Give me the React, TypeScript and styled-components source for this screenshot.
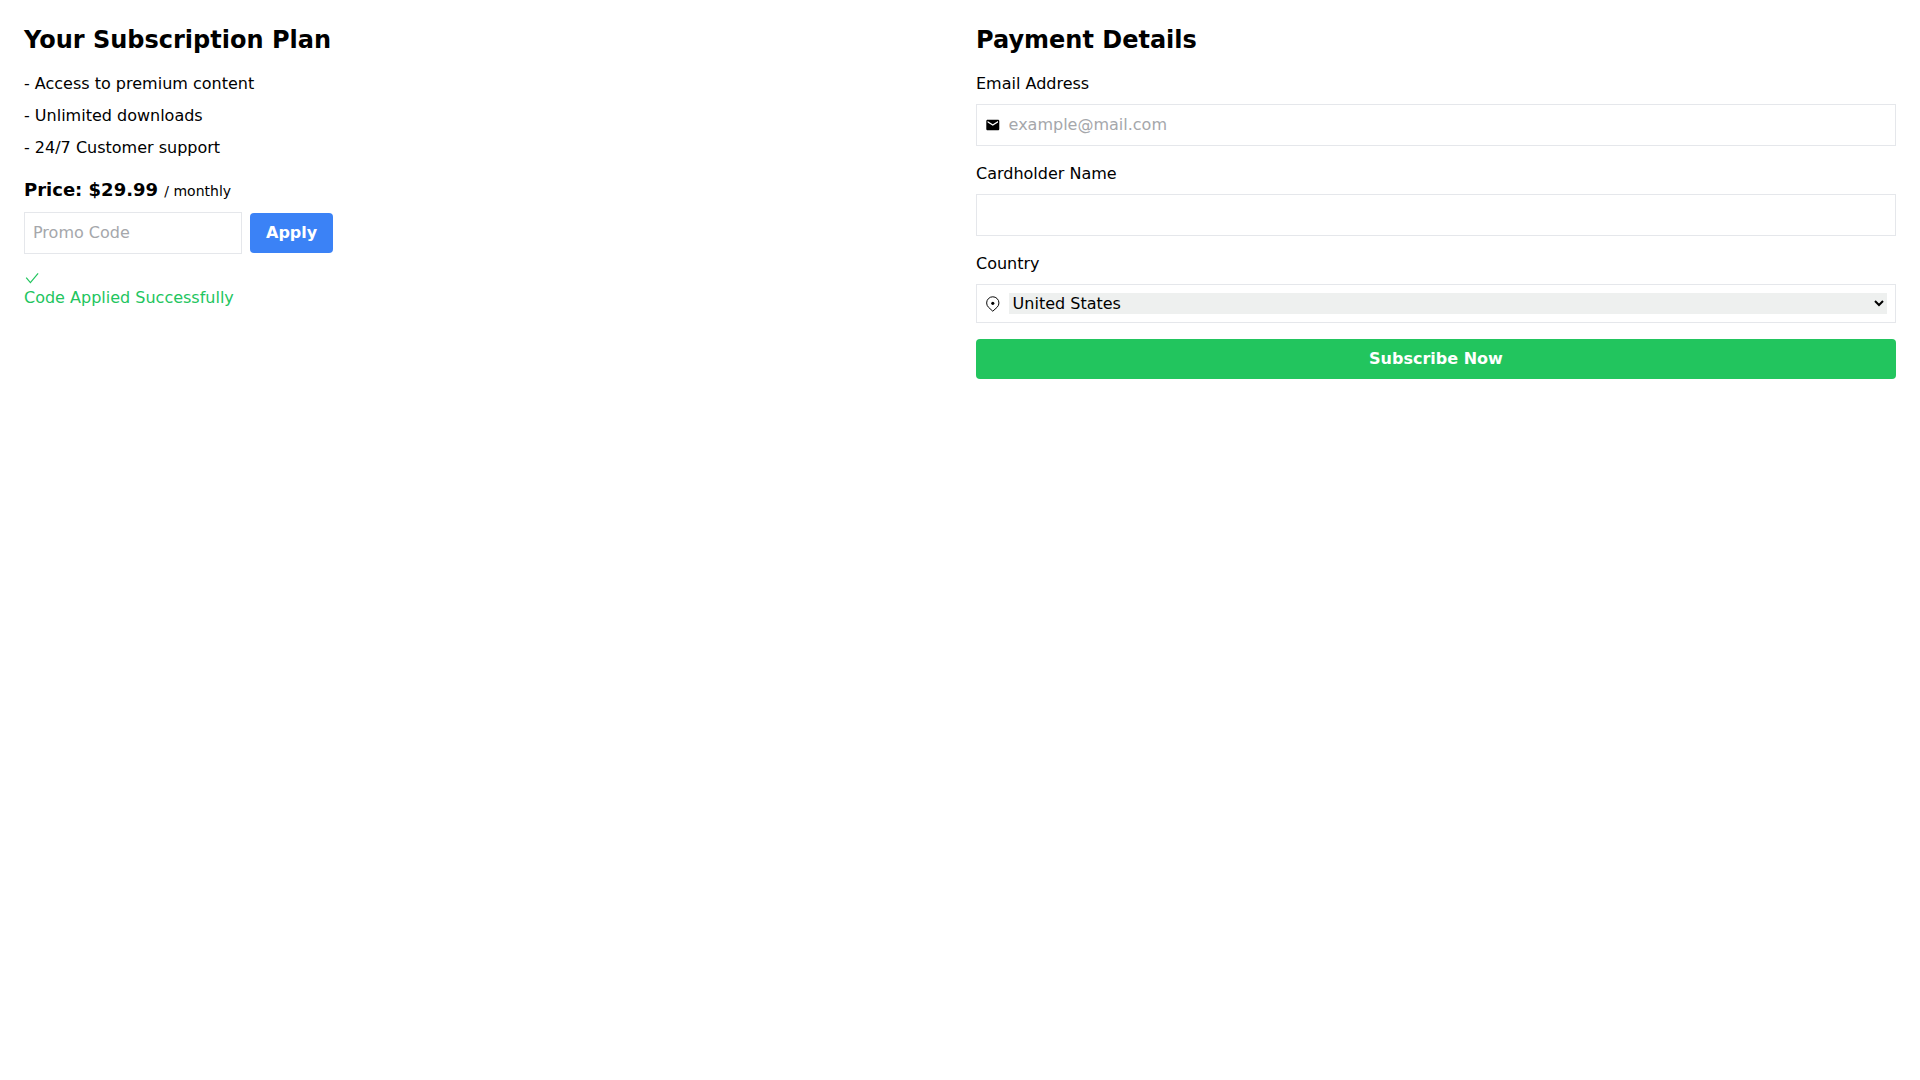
import React, { useState } from 'react';
import styled, { createGlobalStyle } from 'styled-components'
import { MdEmail } from 'react-icons/md'

const GlobalStyle = createGlobalStyle`
*, *::before, *::after {
box-sizing: border-box;
}

body {
margin: 0;
background-color: white;
color: black;
font-family: "DejaVu Sans", sans-serif;
font-size: 16px;
line-height: 24px;
}
`

const PageContainer = styled.div`
display: grid;
grid-template-columns: 1fr 1fr;
gap: 32px;
padding: 24px;
`

const Column = styled.section`
display: flex;
flex-direction: column;
`

const Title = styled.h2`
margin: 0 0 16px;
font-size: 24px;
line-height: 32px;
font-weight: 700;
`

const FeatureList = styled.ul`
display: flex;
flex-direction: column;
gap: 8px;
margin: 0 0 16px;
padding: 0;
list-style: none;
`

const Price = styled.div`
margin-bottom: 8px;
font-size: 18px;
line-height: 28px;
font-weight: 700;
`

const Period = styled.span`
font-size: 14px;
line-height: 20px;
font-weight: 400;
`

const PromoRow = styled.div`
display: flex;
align-items: center;
gap: 8px;
margin-bottom: 16px;
`

const TextInput = styled.input`
width: 100%;
padding: 0;
border: none;
outline: none;
background: transparent;
color: inherit;
font: inherit;

&::placeholder {
  color: #a5a7ab;
  opacity: 1;
}
`

const PromoInput = styled(TextInput)`
width: auto;
padding: 8px;
border: 1px solid #e5e7eb;
`

const Button = styled.button<{ $color: string }>`
padding: 8px 16px;
border: none;
border-radius: 4px;
background-color: ${({ $color }) => $color};
color: white;
font: inherit;
font-weight: 700;
cursor: pointer;
`

const Icon = styled.svg`
width: 16px;
height: 16px;
fill: none;
stroke: currentColor;
`

const SuccessMessage = styled.div`
color: #22c55e;

svg {
  display: block;
}
`

const Label = styled.label`
margin-bottom: 8px;
`

const Field = styled.div`
display: flex;
align-items: center;
gap: 8px;
margin-bottom: 16px;
padding: 8px;
border: 1px solid #e5e7eb;
`

const CountrySelect = styled.select`
width: 100%;
padding: 0;
border: none;
border-radius: 0;
outline: none;
background-color: #eef0ef;
color: black;
font: inherit;
`

const features = ['Access to premium content', 'Unlimited downloads', '24/7 Customer support']

const countries = ['United States', 'Canada', 'United Kingdom']

const CheckIcon = () => (
  <Icon viewBox="0 0 16 16" strokeWidth="1.2">
    <path d="M2.2 7.7 6.4 12.6 14.1 3.4" />
  </Icon>
)

const PinIcon = () => (
  <Icon viewBox="0 0 16 16">
    <path d="M8 15.4 3.6 11.4A6.3 6.3 0 1 1 12.4 11.4Z" />
    <circle cx="8" cy="7.3" r="1.6" fill="currentColor" stroke="none" />
  </Icon>
)

const App = () => {
  const [promoCode, setPromoCode] = useState<string>('')
  const [promoApplied, setPromoApplied] = useState<boolean>(true)
  const [country, setCountry] = useState<string>(countries[0])

  return (
    <>
      <GlobalStyle />
      <PageContainer>
        <Column>
          <Title>Your Subscription Plan</Title>
          <FeatureList>
            {features.map(feature => <li key={feature}>- {feature}</li>)}
          </FeatureList>
          <Price>
            Price: $29.99 <Period>/ monthly</Period>
          </Price>
          <PromoRow>
            <PromoInput
              placeholder="Promo Code"
              value={promoCode}
              onChange={e => setPromoCode(e.target.value)}
            />
            <Button $color="#3b82f6" onClick={() => setPromoApplied(true)}>Apply</Button>
          </PromoRow>
          {promoApplied && (
            <SuccessMessage>
              <CheckIcon />
              Code Applied Successfully
            </SuccessMessage>
          )}
        </Column>
        <Column>
          <Title>Payment Details</Title>
          <Label htmlFor="email">Email Address</Label>
          <Field>
            <MdEmail />
            <TextInput id="email" type="email" placeholder="example@mail.com" />
          </Field>
          <Label htmlFor="cardholder">Cardholder Name</Label>
          <Field>
            <TextInput id="cardholder" type="text" />
          </Field>
          <Label htmlFor="country">Country</Label>
          <Field>
            <PinIcon />
            <CountrySelect id="country" value={country} onChange={e => setCountry(e.target.value)}>
              {countries.map(name => <option key={name}>{name}</option>)}
            </CountrySelect>
          </Field>
          <Button $color="#22c55e">Subscribe Now</Button>
        </Column>
      </PageContainer>
    </>
  );
}

export default App;
